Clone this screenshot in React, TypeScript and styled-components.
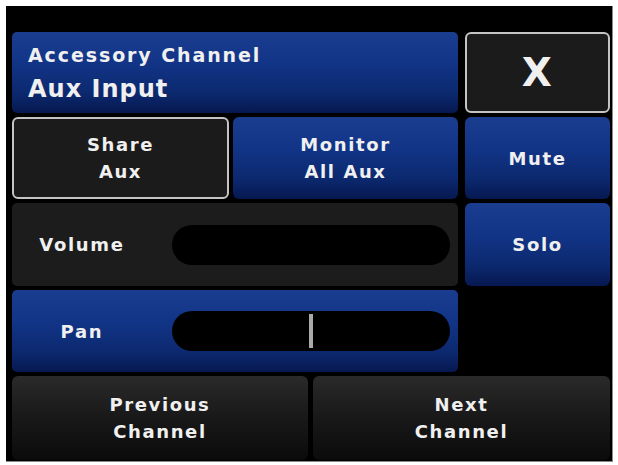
import styled, { createGlobalStyle, css } from "styled-components";

const GlobalStyle = createGlobalStyle`
  html, body {
    margin: 0;
    padding: 0;
    background: #ffffff;
  }
  * {
    box-sizing: border-box;
  }
`;

const blueFill = css`
  background: linear-gradient(
    to bottom,
    #1a3d90 0%,
    #123486 40%,
    #0c296f 75%,
    #061850 100%
  );
`;

const Screen = styled.div`
  margin: 6px;
  width: 607px;
  height: 456px;
  background: #000;
  border-right: 1px solid #8a8a8a;
  border-bottom: 1px solid #8a8a8a;
  padding: 26px 2px 0 6px;
  display: grid;
  grid-template-columns: 446px 145px;
  grid-template-rows: 81px 82px 83px 82px 84px;
  column-gap: 7px;
  row-gap: 4px;
  font-family: "DejaVu Sans", Verdana, sans-serif;
  color: #f0f0f0;
`;

const Header = styled.div`
  ${blueFill};
  border-radius: 5px;
  padding: 12px 16px 0;
  display: flex;
  flex-direction: column;
`;

const Title = styled.div`
  font-size: 19px;
  font-weight: bold;
  letter-spacing: 1.9px;
  line-height: 22px;
`;

const Subtitle = styled.div`
  margin-top: 6px;
  font-size: 24px;
  font-weight: bold;
  letter-spacing: 1px;
  line-height: 34px;
`;

type Tone = "blue" | "outlined" | "shaded";

const Button = styled.div<{ $tone: Tone; $size?: number }>`
  display: flex;
  align-items: center;
  justify-content: center;
  text-align: center;
  border-radius: 6px;
  font-size: ${(p) => p.$size ?? 18}px;
  font-weight: bold;
  letter-spacing: 1.6px;
  line-height: 27px;
  white-space: pre-line;
  ${(p) =>
    p.$tone === "blue" &&
    css`
      ${blueFill};
    `}
  ${(p) =>
    p.$tone === "outlined" &&
    css`
      background: #1b1b1b;
      border: 2px solid #c4c4c4;
    `}
  ${(p) =>
    p.$tone === "shaded" &&
    css`
      background: linear-gradient(to bottom, #2a2a2a 0%, #1a1a1a 45%, #0b0b0b 100%);
    `}
`;

const Split = styled.div`
  display: grid;
  grid-template-columns: 217px 1fr;
  column-gap: 4px;
`;

const SliderPanel = styled.div<{ $tone: "dark" | "blue" }>`
  border-radius: 5px;
  display: flex;
  align-items: center;
  padding-right: 8px;
  ${(p) =>
    p.$tone === "blue"
      ? css`
          ${blueFill};
        `
      : css`
          background: #1c1c1c;
        `}
`;

const SliderLabel = styled.div`
  width: 140px;
  text-align: center;
  font-size: 18px;
  font-weight: bold;
  letter-spacing: 1.7px;
  margin-right: 20px;
`;

const Track = styled.div`
  position: relative;
  flex: 1;
  height: 40px;
  border-radius: 20px;
  background: #000;
`;

const Marker = styled.div`
  position: absolute;
  top: 3px;
  width: 4px;
  height: 34px;
  background: #a9a9a9;
`;

const Footer = styled.div`
  grid-column: 1 / span 2;
  display: grid;
  grid-template-columns: 296px 1fr;
  column-gap: 5px;
`;

const Empty = styled.div``;

export default function App() {
  const pan = 0.5;
  return (
    <>
      <GlobalStyle />
      <Screen>
        <Header>
          <Title>Accessory Channel</Title>
          <Subtitle>Aux Input</Subtitle>
        </Header>
        <Button $tone="outlined" $size={39}>
          X
        </Button>

        <Split>
          <Button $tone="outlined">{"Share\nAux"}</Button>
          <Button $tone="blue">{"Monitor\nAll Aux"}</Button>
        </Split>
        <Button $tone="blue">Mute</Button>

        <SliderPanel $tone="dark">
          <SliderLabel>Volume</SliderLabel>
          <Track />
        </SliderPanel>
        <Button $tone="blue">Solo</Button>

        <SliderPanel $tone="blue">
          <SliderLabel>Pan</SliderLabel>
          <Track>
            <Marker style={{ left: `calc(${pan * 100}% - 2px)` }} />
          </Track>
        </SliderPanel>
        <Empty />

        <Footer>
          <Button $tone="shaded">{"Previous\nChannel"}</Button>
          <Button $tone="shaded">{"Next\nChannel"}</Button>
        </Footer>
      </Screen>
    </>
  );
}
